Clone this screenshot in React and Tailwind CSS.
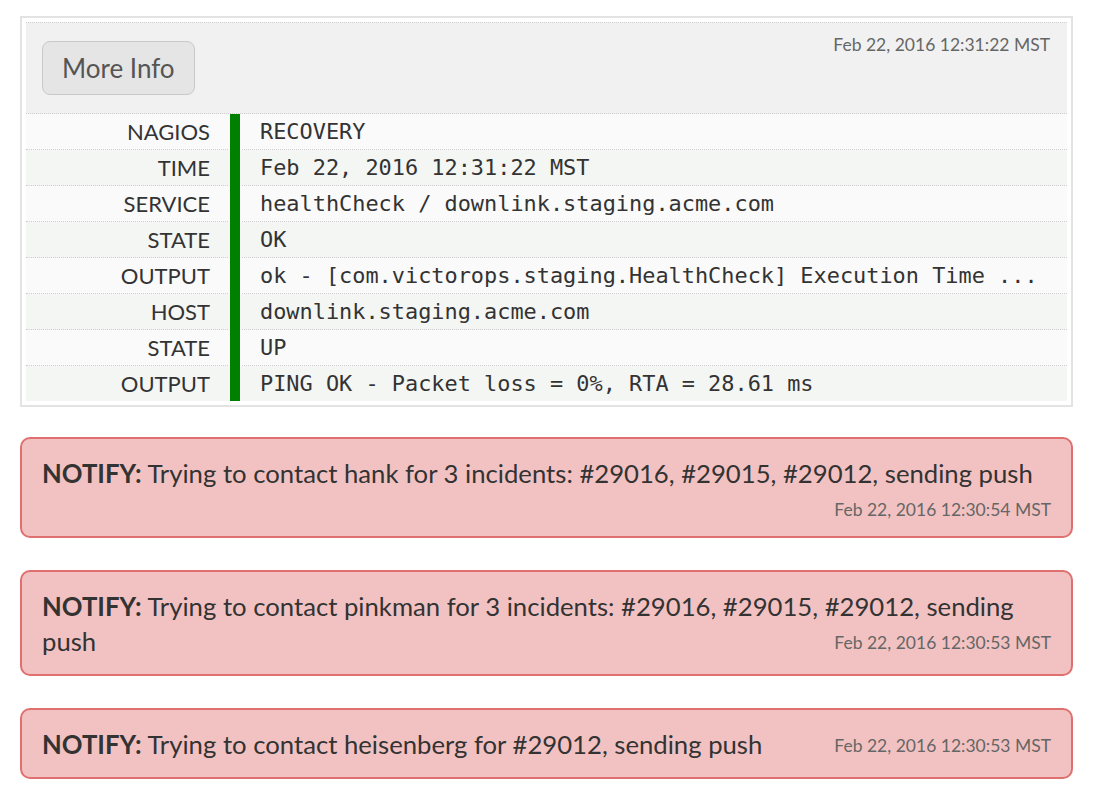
import React from "react"

const rows = [
  { label: "NAGIOS", value: "RECOVERY" },
  { label: "TIME", value: "Feb 22, 2016 12:31:22 MST" },
  { label: "SERVICE", value: "healthCheck / downlink.staging.acme.com" },
  { label: "STATE", value: "OK" },
  { label: "OUTPUT", value: "ok - [com.victorops.staging.HealthCheck] Execution Time ..." },
  { label: "HOST", value: "downlink.staging.acme.com" },
  { label: "STATE", value: "UP" },
  { label: "OUTPUT", value: "PING OK - Packet loss = 0%, RTA = 28.61 ms" },
]

const notifications = [
  {
    text: "Trying to contact hank for 3 incidents: #29016, #29015, #29012, sending push",
    time: "Feb 22, 2016 12:30:54 MST",
  },
  {
    text: "Trying to contact pinkman for 3 incidents: #29016, #29015, #29012, sending push",
    time: "Feb 22, 2016 12:30:53 MST",
  },
  {
    text: "Trying to contact heisenberg for #29012, sending push",
    time: "Feb 22, 2016 12:30:53 MST",
  },
]

const lato = { fontFamily: "Lato, 'Liberation Sans', sans-serif" }

const AlertCard = () => (
  <div className="border-2 border-[#e3e3e3] p-1 bg-white">
    {/* header */}
    <div className="flex justify-between items-start bg-[#f1f1f1] border-y border-dotted border-[#cfcfcf] pt-[11px] pb-[18px] pl-4 pr-[17px]">
      <button className="mt-[7px] h-[54px] px-[19px] rounded-[8px] border border-[#c9c9c9] bg-[#e5e5e5] text-[#555] text-[26px]">
        More Info
      </button>
      <div className="text-[17.5px] leading-[21px] text-[#666]">Feb 22, 2016 12:31:22 MST</div>
    </div>

    {/* details */}
    <div>
      {rows.map((row, i) => {
        const last = i === rows.length - 1
        const border = last ? "" : "border-b border-dotted border-[#cfcfcf]"
        return (
          <div key={i} className={`flex ${i % 2 === 0 ? "bg-[#fafafa]" : "bg-[#f4f6f4]"}`}>
            <div className={`w-[202px] shrink-0 text-right pr-[18px] text-[22px] leading-[35px] text-[#333] ${border}`}>
              {row.label}
            </div>
            <div className="w-[10px] ml-[2px] mr-[2px] shrink-0 bg-[#008000]" />
            <div
              className={`flex-1 min-w-0 pl-[18px] whitespace-nowrap overflow-hidden text-[21.9px] leading-[35px] text-[#333] ${border}`}
              style={{ fontFamily: "'DejaVu Sans Mono', 'Liberation Mono', monospace" }}
            >
              {row.value}
            </div>
          </div>
        )
      })}
    </div>
  </div>
)

export default function App() {
  return (
    <div className="bg-white min-h-[804px] px-5 pt-4" style={lato}>
      <AlertCard />

      <div className="mt-[30px] flex flex-col gap-8">
        {notifications.map((n, i) => (
          <div
            key={i}
            className="flow-root rounded-[10px] border-2 border-[#e07070] bg-[#f2c2c2] pt-[17px] pb-[15px] px-5 text-[#333] text-[25.7px] leading-[35px]"
          >
            <span className="font-bold">NOTIFY:</span> {n.text}
            <span className="float-right ml-4 mt-[8px] mb-[1px] text-[17.5px] leading-[21px] text-[#666]">
              {n.time}
            </span>
          </div>
        ))}
      </div>
    </div>
  )
}
